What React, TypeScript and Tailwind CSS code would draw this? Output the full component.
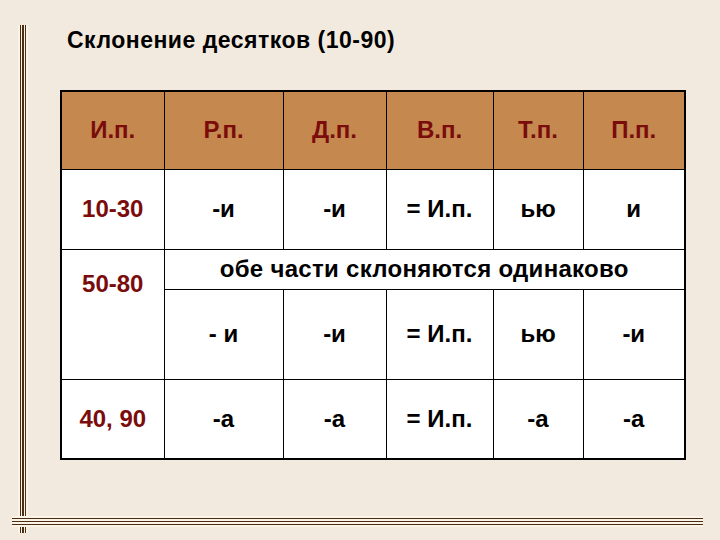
import React from "react";

const red = "text-[#7a0c0c]";

export default function App() {
  const cell = "border border-black text-center align-middle p-0";
  return (
    <div className="relative w-[720px] h-[540px] bg-[#f3eadf] overflow-hidden" style={{ fontFamily: '"Liberation Sans", Arial, sans-serif' }}>
      {/* decorative vertical line */}
      <div className="absolute left-[18px] top-[25px] h-[508px] w-[10px] flex justify-center gap-[1px] bg-[#fbf3e6]">
        <div className="w-[1.5px] h-full bg-[#4b2d16]" />
        <div className="w-[1.5px] h-full bg-[#4b2d16]" />
        <div className="w-[1.5px] h-full bg-[#4b2d16]" />
      </div>
      {/* decorative horizontal line */}
      <div className="absolute left-[12px] top-[516px] w-[691px] h-[11px] flex flex-col justify-center gap-[1.5px] bg-[#fbf3e6]">
        <div className="h-[1.5px] w-full bg-[#4b2d16]" />
        <div className="h-[1.5px] w-full bg-[#4b2d16]" />
        <div className="h-[1.5px] w-full bg-[#4b2d16]" />
      </div>

      <div className="pl-[67px] pt-[27px]">
        <h1 className="text-[23px] leading-[26px] font-bold text-black tracking-[0.5px]">Склонение десятков (10-90)</h1>
      </div>

      <div className="pl-[60px] pt-[37px]">
        <table className="border-collapse border-2 border-black text-[24px] font-bold w-[624px] table-fixed">
          <colgroup>
            <col className="w-[103px]" />
            <col className="w-[119px]" />
            <col className="w-[103px]" />
            <col className="w-[107px]" />
            <col className="w-[90px]" />
            <col className="w-[102px]" />
          </colgroup>
          <tbody>
            <tr className="h-[78px] bg-[#c5884f]">
              <td className={`${cell} ${red}`}>И.п.</td>
              <td className={`${cell} ${red}`}>Р.п.</td>
              <td className={`${cell} ${red}`}>Д.п.</td>
              <td className={`${cell} ${red}`}>В.п.</td>
              <td className={`${cell} ${red}`}>Т.п.</td>
              <td className={`${cell} ${red}`}>П.п.</td>
            </tr>
            <tr className="h-[80px] bg-white">
              <td className={`${cell} ${red}`}>10-30</td>
              <td className={cell}>-и</td>
              <td className={cell}>-и</td>
              <td className={cell}>= И.п.</td>
              <td className={cell}>ью</td>
              <td className={cell}>и</td>
            </tr>
            <tr className="h-[40px] bg-white">
              <td rowSpan={2} className={`border border-black text-center align-top pt-[16px] ${red}`}>50-80</td>
              <td colSpan={5} className={`${cell} tracking-[0.3px]`}>обе части склоняются одинаково</td>
            </tr>
            <tr className="h-[90px] bg-white">
              <td className={cell}>- и</td>
              <td className={cell}>-и</td>
              <td className={cell}>= И.п.</td>
              <td className={cell}>ью</td>
              <td className={cell}>-и</td>
            </tr>
            <tr className="h-[80px] bg-white">
              <td className={`${cell} ${red}`}>40, 90</td>
              <td className={cell}>-а</td>
              <td className={cell}>-а</td>
              <td className={cell}>= И.п.</td>
              <td className={cell}>-а</td>
              <td className={cell}>-а</td>
            </tr>
          </tbody>
        </table>
      </div>
    </div>
  );
}
